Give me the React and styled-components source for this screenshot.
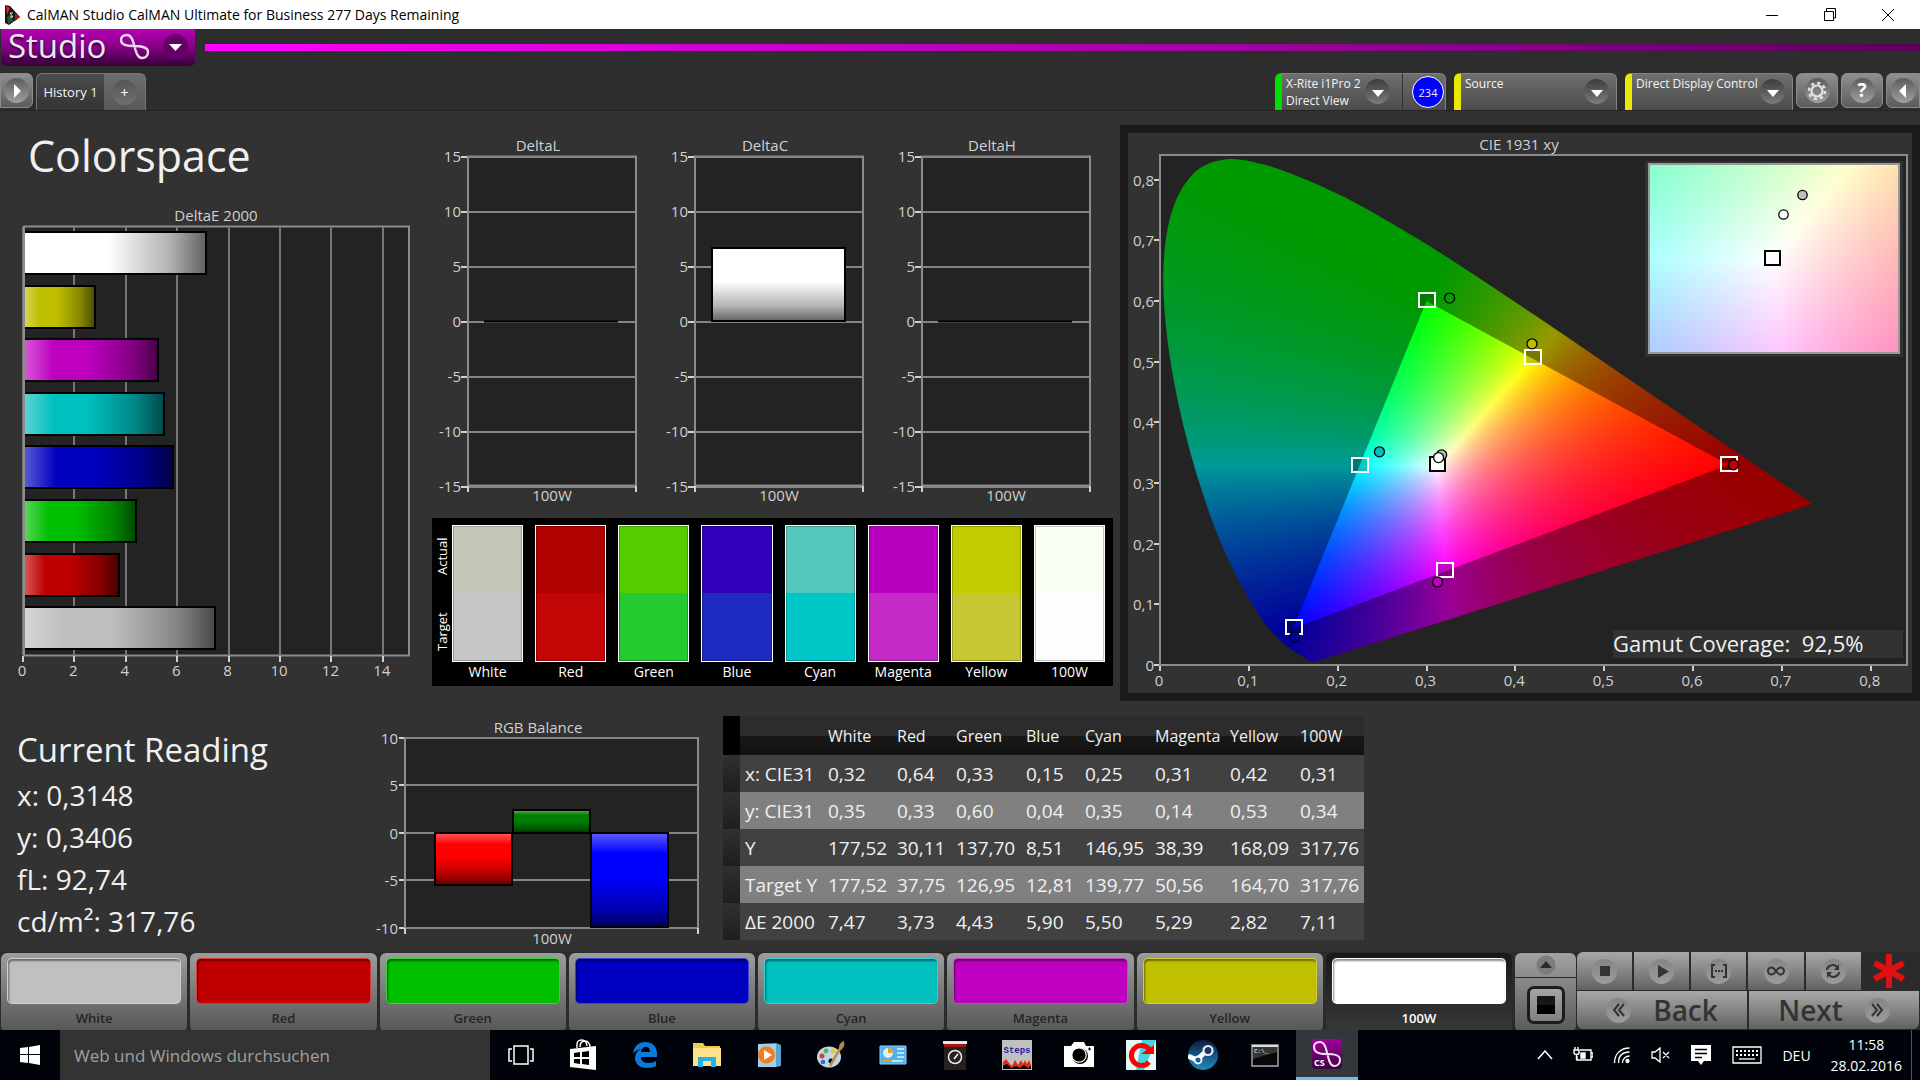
import React from 'react';
import styled, { createGlobalStyle } from 'styled-components';

const GlobalStyle = createGlobalStyle`
  * {
    box-sizing: border-box;
  }
  body {
    margin: 0;
    background: #323232;
    font-family: "Open Sans", "Noto Sans", sans-serif;
    color: #f0f0f0;
  }
  button, input {
    font-family: inherit;
    border: 0;
    padding: 0;
    margin: 0;
  }
  h1, h2, p {
    margin: 0;
    font-weight: 400;
  }
`;

const Page = styled.div`
  display: flex;
  flex-direction: column;
  min-height: 100vh;
`;

/* window title */
const TitleBar = styled.header`
  display: flex;
  align-items: center;
  justify-content: space-between;
  height: 29px;
  background: #fff;
  color: #000;
  font-size: 14px;
`;
const TitleText = styled.div`
  display: flex;
  align-items: center;
  gap: 6px;
  padding-left: 4px;
`;
const WindowButtons = styled.div`
  display: flex;
  padding-right: 3px;
`;
const WindowButton = styled.button`
  display: grid;
  place-items: center;
  width: 58px;
  height: 29px;
  background: none;
`;

/* app header */
const AppHeader = styled.div`
  height: 82px;
  background: #2d2d2d;
  border-bottom: 1px solid #252525;
`;
const BrandRow = styled.div`
  display: flex;
  align-items: flex-start;
  height: 44px;
`;
const StudioButton = styled.button`
  display: flex;
  align-items: center;
  justify-content: space-between;
  width: 194px;
  height: 37px;
  margin-left: 1px;
  padding: 0 7px 3px 7px;
  border-radius: 0 0 5px 5px;
  background: linear-gradient(#b400b4, #8a008a 45%, #37003a);
  color: #f0e6f0;
  font-size: 33px;
  font-weight: 500;
  line-height: 32px;
  text-shadow: 0 2px 2px #300030;
`;
const Stripe = styled.div`
  flex: 1;
  height: 7px;
  margin: 15px 0 0 10px;
  background: linear-gradient(90deg, #ff00ff, #a800a8 55%, #580058);
`;
const TabRow = styled.div`
  display: flex;
  justify-content: space-between;
  height: 37px;
`;
const TabGroup = styled.div`
  display: flex;
  align-items: flex-start;
`;
const SquareButton = styled.button`
  display: grid;
  place-items: center;
  width: ${(p) => p.$width || 42}px;
  height: 35px;
  margin-left: ${(p) => p.$gap ?? 3}px;
  border: 1px solid #8c8c8c;
  border-radius: ${(p) => p.$radius || '6px'};
  background: linear-gradient(#8f8f8f, #5c5c5c);
`;
const Round = styled.span`
  display: grid;
  place-items: center;
  width: 25px;
  height: 25px;
  border-radius: 50%;
  background: ${(p) => (p.$light ? 'linear-gradient(#5c5c5c, #a0a0a0)' : 'linear-gradient(#3c3c3c, #7c7c7c)')};
  color: #fff;
  font-size: 19px;
  line-height: 25px;
`;
const HistoryTab = styled.button`
  width: 68px;
  height: 37px;
  margin-left: 3px;
  border: 1px solid #777;
  border-width: 1px 0 0 1px;
  border-radius: 6px 0 0 0;
  background: linear-gradient(#4c4c4c, #333);
  color: #f4f4f4;
  font-size: 13px;
`;
const AddTab = styled.button`
  display: grid;
  place-items: center;
  width: 42px;
  height: 37px;
  border: 1px solid #777;
  border-width: 1px 1px 0 0;
  border-radius: 0 6px 0 0;
  background: linear-gradient(#6e6e6e, #575757);

  ${Round} {
    background: linear-gradient(#555, #707070);
    font-size: 14px;
  }
`;
const Device = styled.button`
  display: flex;
  align-items: flex-start;
  justify-content: space-between;
  width: ${(p) => p.$width}px;
  height: 37px;
  padding: 1px ${(p) => (p.$joined ? 12 : 7)}px 0 4px;
  border: 1px solid #838383;
  border-left: 7px solid ${(p) => p.$color};
  border-bottom: 0;
  border-radius: ${(p) => (p.$joined ? '6px 0 0 0' : '6px 6px 0 0')};
  border-right-width: ${(p) => (p.$joined ? 0 : 1)}px;
  background: linear-gradient(#6f6f6f, #4b4b4b);
  color: #f4f4f4;
  font-size: 12px;
  line-height: 17px;
  text-align: left;
  white-space: nowrap;
  margin-left: ${(p) => (p.$joined ? 0 : 8)}px;

  ${Round} {
    margin-top: 4px;
  }
`;
const Counter = styled.div`
  display: grid;
  place-items: center;
  width: 44px;
  height: 37px;
  padding-left: 8px;
  border: 1px solid #838383;
  border-left: 1px solid #333;
  border-bottom: 0;
  border-radius: 0 6px 0 0;
  background: linear-gradient(#6f6f6f, #4b4b4b);
`;
const Count = styled.span`
  display: grid;
  place-items: center;
  width: 32px;
  height: 32px;
  border: 1px solid #fff;
  border-radius: 50%;
  background: #00f;
  font-size: 11px;
`;

/* charts area */
const Workspace = styled.main`
  flex: 1;
  background: #323232;
`;
const TopGrid = styled.section`
  display: grid;
  grid-template-columns: 430fr 690fr 800fr;
  align-items: start;
`;
const Heading = styled.h1`
  padding: 0 0 4px 28px;
  font-size: 43px;
  line-height: 90px;
`;
const Chart = styled.svg`
  display: block;
  width: 100%;
  height: auto;
  font-size: 15px;
  fill: #d0d0d0;
`;
const MiddleColumn = styled.div`
  padding: 25px 7px 0 2px;
`;
const DeltaRow = styled.div`
  display: grid;
  grid-template-columns: repeat(3, 1fr);
`;
const SwatchPanel = styled.div`
  display: flex;
  height: 168px;
  margin-top: 7px;
  background: #000;
`;
const SideLabels = styled.div`
  display: flex;
  flex-direction: column;
  width: 20px;
  padding-bottom: 16px;
`;
const SideLabel = styled.span`
  flex: 1;
  writing-mode: vertical-rl;
  transform: rotate(180deg);
  text-align: center;
  font-size: 13px;
  line-height: 20px;
  color: #fff;
`;
const Swatches = styled.div`
  flex: 1;
  display: grid;
  grid-template-columns: repeat(8, 1fr);
  gap: 12px;
  padding: 7px 8px 0 0;
`;
const SwatchName = styled.div`
  font-size: 14px;
  line-height: 20px;
  text-align: center;
  color: #fff;
`;
const Swatch = styled.div`
  height: 137px;
  border: 1px solid #fff;
  background: linear-gradient(${(p) => p.$actual} 50%, ${(p) => p.$target} 50%);
  box-shadow: inset 0 0 0 1px rgba(0, 0, 0, 0.22);
`;
const CiePanel = styled.div`
  margin-top: 14px;
  padding: 8px;
  background: #1a1a1a;
`;
const CieInner = styled.div`
  background: #323232;
`;

const BottomGrid = styled.section`
  display: grid;
  grid-template-columns: 372fr 338fr 1210fr;
  align-items: start;
`;
const Readings = styled.div`
  padding: 25px 0 0 17px;
`;
const ReadingTitle = styled.h2`
  font-size: 33px;
  line-height: 48px;
`;
const Reading = styled.p`
  font-size: 28px;
  line-height: 42px;
`;
const Results = styled.table`
  width: 641px;
  margin: 15px 0 0 13px;
  border-collapse: collapse;
  table-layout: fixed;
  color: #f0f0f0;
  font-size: 19px;

  th, td {
    height: 37px;
    padding: 0 0 0 5px;
    font-weight: 400;
    text-align: left;
    white-space: nowrap;
  }
  thead td, thead th {
    height: 39px;
    padding-top: 1px;
  }
  tbody tr {
    background: #414141;
  }
  tbody tr:nth-child(even) {
    background: #808080;
  }
`;
const HeadRow = styled.tr`
  background: linear-gradient(#2c2c2c 50%, #191919 50%, #111);
  font-size: 16px;
`;
const Grip = styled.td`
  width: 17px;
  background: ${(p) => (p.$head ? '#000' : 'linear-gradient(#303030, #1e1e1e)')};
`;

/* colour buttons and transport */
const PatternBar = styled.nav`
  display: grid;
  grid-template-columns: 1515fr 61fr 344fr;
  height: 78px;
  background: #2b2b2b;
`;
const Patterns = styled.div`
  display: grid;
  grid-template-columns: repeat(8, 1fr);
  gap: 3px;
  padding: 1px 3px 1px 1px;
`;
const Pattern = styled.button`
  display: flex;
  flex-direction: column;
  align-items: stretch;
  padding: 5px 6px 0;
  border-radius: 6px;
  background: ${(p) => (p.$active ? 'linear-gradient(#191919, #383838)' : 'linear-gradient(#9d9d9d, #565656)')};
  color: ${(p) => (p.$active ? '#fff' : '#252525')};
  font-size: 13px;
  font-weight: 600;
  line-height: 28px;
`;
const PatternColor = styled.span`
  height: 46px;
  border-radius: 5px;
  background: ${(p) => p.$color};
  border: 1px solid rgba(255, 255, 255, 0.25);
  box-shadow: inset 1px 2px 2px rgba(0, 0, 0, 0.45);
`;
const StopColumn = styled.div`
  display: flex;
  flex-direction: column;
  gap: 1px;
  padding: 1px 0;
`;
const StopButton = styled.button`
  display: grid;
  place-items: center;
  flex: ${(p) => p.$grow};
  border-radius: ${(p) => (p.$grow === 1 ? '6px 6px 0 0' : '0 0 6px 6px')};
  background: ${(p) => (p.$grow === 1 ? 'linear-gradient(#a2a2a2, #8c8c8c)' : 'linear-gradient(#8a8a8a, #595959)')};
`;
const StopFrame = styled.span`
  display: grid;
  place-items: center;
  width: 38px;
  height: 38px;
  border: 3px solid #1c1c1c;
  border-radius: 7px;
  background: linear-gradient(#a5a5a5, #808080);
`;
const StopSquare = styled.span`
  width: 18px;
  height: 18px;
  background: linear-gradient(#161616 50%, #000 50%);
`;
const Transport = styled.div`
  display: flex;
  flex-direction: column;
  gap: 1px;
  padding: 0 1px 1px;
`;
const TransportRow = styled.div`
  display: grid;
  grid-template-columns: ${(p) => p.$columns};
  gap: 2px;
  height: 38px;
`;
const TransportButton = styled.button`
  display: flex;
  align-items: center;
  justify-content: center;
  gap: 22px;
  background: linear-gradient(#a8a8a8, #626262);
  color: #333;
  font-size: 28px;
  font-weight: 600;
  line-height: 36px;
  border-radius: ${(p) => p.$radius || '0'};
`;
const Knob = styled.span`
  display: grid;
  place-items: center;
  width: 25px;
  height: 25px;
  border-radius: 50%;
  background: linear-gradient(#858585, #9c9c9c);
`;
const Star = styled.div`
  display: grid;
  justify-items: start;
  align-items: center;
  padding-left: 9px;
`;

/* windows taskbar */
const Taskbar = styled.footer`
  display: flex;
  justify-content: space-between;
  height: 50px;
  background: #00040a;
`;
const TaskGroup = styled.div`
  display: flex;
  align-items: stretch;
`;
const TaskButton = styled.button`
  display: grid;
  place-items: center;
  width: ${(p) => p.$width || 62}px;
  background: ${(p) => (p.$active ? '#33373c' : 'none')};
  border-bottom: ${(p) => (p.$active ? '3px solid #76b9ed' : '0')};
`;
const Search = styled.input`
  width: 430px;
  padding: 0 14px;
  background: #333;
  font-size: 17px;

  &::placeholder {
    color: #a0a0a0;
    opacity: 1;
  }
`;
const Tray = styled.div`
  display: flex;
  align-items: center;
  gap: 20px;
  padding-right: 9px;
  border-right: 1px solid #555;
  margin-right: 8px;
  color: #fff;
  font-size: 14px;
  line-height: 21px;
`;
const Clock = styled.time`
  text-align: center;
`;

const deltaE = [
  ['#ffffff', 7.11], ['#bfbf00', 2.82], ['#bf00bf', 5.25], ['#00bfbf', 5.5],
  ['#0000bf', 5.85], ['#00bf00', 4.4], ['#bf0000', 3.73], ['#bfbfbf', 7.47],
];

const swatches = [
  ['White', '#c4c7b8', '#c5c5c5'],
  ['Red', '#b10000', '#c20606'],
  ['Green', '#55cc00', '#24cb30'],
  ['Blue', '#3200bb', '#1e2ac2'],
  ['Cyan', '#54c8bc', '#00c6c8'],
  ['Magenta', '#b800be', '#c42bc6'],
  ['Yellow', '#c2ca00', '#c6c733'],
  ['100W', '#f6fff2', '#fdfdfd'],
];

const patterns = [
  ['White', '#c0c0c0'], ['Red', '#c00000'], ['Green', '#00c000'], ['Blue', '#0000c0'],
  ['Cyan', '#00c0c0'], ['Magenta', '#c000c0'], ['Yellow', '#c0c000'], ['100W', '#ffffff'],
];

const columns = [['White', 69], ['Red', 59], ['Green', 70], ['Blue', 59], ['Cyan', 70], ['Magenta', 75], ['Yellow', 70], ['100W', 69]];
const rows = [
  ['x: CIE31', '0,32', '0,64', '0,33', '0,15', '0,25', '0,31', '0,42', '0,31'],
  ['y: CIE31', '0,35', '0,33', '0,60', '0,04', '0,35', '0,14', '0,53', '0,34'],
  ['Y', '177,52', '30,11', '137,70', '8,51', '146,95', '38,39', '168,09', '317,76'],
  ['Target Y', '177,52', '37,75', '126,95', '12,81', '139,77', '50,56', '164,70', '317,76'],
  ['ΔE 2000', '7,47', '3,73', '4,43', '5,90', '5,50', '5,29', '2,82', '7,11'],
];

/* shine for the bars, laid over a flat colour */
function Shine({ id, vertical }) {
  return (
    <linearGradient id={id} x1="0" y1="0" x2={vertical ? 0 : 1} y2={vertical ? 1 : 0}>
      <stop offset="0" stopColor="#fff" stopOpacity="0.36" />
      <stop offset="0.22" stopColor="#fff" stopOpacity="0" />
      <stop offset="0.46" stopColor="#000" stopOpacity="0" />
      <stop offset="0.8" stopColor="#000" stopOpacity="0.3" />
      <stop offset="1" stopColor="#000" stopOpacity="0.62" />
    </linearGradient>
  );
}

function DeltaEChart() {
  const unit = 25.7;
  return (
    <Chart viewBox="0 0 430 480" role="img" aria-label="DeltaE 2000">
      <defs><Shine id="shineH" /></defs>
      <text x="216" y="16" textAnchor="middle">DeltaE 2000</text>
      <rect x="24" y="21.5" width="385" height="429" fill="#232323" stroke="#8c8c8c" strokeWidth="2" />
      {[0, 2, 4, 6, 8, 10, 12, 14].map((n) => (
        <g key={n}>
          <path d={`M${Math.round(23 + n * unit)} 22V450`} stroke="#757575" strokeWidth="2" />
          <path d={`M${Math.round(23 + n * unit)} 451V457`} stroke="#d0d0d0" strokeWidth="2" />
          <text x={22 + n * unit} y="471" textAnchor="middle">{n}</text>
        </g>
      ))}
      {deltaE.map(([color, value], i) => {
        const box = { x: 24, y: Math.round(27 + i * 53.6), width: Math.round(value * unit) - 1, height: 42 };
        return (
          <g key={color}>
            <rect {...box} fill={color} />
            <rect {...box} fill="url(#shineH)" stroke="#000" strokeWidth="2" />
          </g>
        );
      })}
      <path d="M24 22V451" stroke="#8c8c8c" strokeWidth="2" />
    </Chart>
  );
}

function DeltaChart({ title, filled }) {
  return (
    <Chart viewBox="0 0 227 375" role="img" aria-label={title}>
      <defs><Shine id="shineV" vertical /></defs>
      <text x="106" y="15" textAnchor="middle">{title}</text>
      <rect x="36" y="20.5" width="168" height="329" fill="#232323" stroke="#8c8c8c" strokeWidth="2" />
      {[15, 10, 5, 0, -5, -10, -15].map((n, i) => (
        <g key={n}>
          <path d={`M36 ${21 + i * 55}H204`} stroke="#858585" strokeWidth="2" />
          <path d={`M29 ${21 + i * 55}H35`} stroke="#d0d0d0" strokeWidth="2" />
          <text x="29" y={26 + i * 55} textAnchor="end">{n}</text>
        </g>
      ))}
      <path d="M36 350V356M204 350V356" stroke="#d0d0d0" strokeWidth="2" />
      {filled ? (
        <g>
          <rect x="53" y="112" width="133" height="73" fill="#fff" />
          <rect x="53" y="112" width="133" height="73" fill="url(#shineV)" stroke="#000" strokeWidth="2" />
        </g>
      ) : (
        <path d="M52 185.500H186" stroke="#000" strokeWidth="2" />
      )}
      <text x="120" y="365" textAnchor="middle">100W</text>
    </Chart>
  );
}

function RgbChart() {
  const bars = [
    { color: '#ff0000', x: 63, y: 132, height: 52 },
    { color: '#008000', x: 141, y: 109, height: 23 },
    { color: '#0000ff', x: 219, y: 132, height: 94 },
  ];
  return (
    <Chart viewBox="0 0 338 250" role="img" aria-label="RGB Balance">
      <defs><Shine id="shineRgb" vertical /></defs>
      <text x="166" y="32" textAnchor="middle">RGB Balance</text>
      <rect x="33" y="37" width="293" height="190" fill="#232323" stroke="#8c8c8c" strokeWidth="2" />
      {[10, 5, 0, -5, -10].map((n, i) => (
        <g key={n}>
          <path d={`M33 ${Math.round(37 + i * 47.4)}H326`} stroke="#858585" strokeWidth="2" />
          <path d={`M27 ${Math.round(37 + i * 47.4)}H32`} stroke="#d0d0d0" strokeWidth="2" />
          <text x="26" y={Math.round(43 + i * 47.4)} textAnchor="end">{n}</text>
        </g>
      ))}
      <path d="M33 227V233M326 227V233" stroke="#d0d0d0" strokeWidth="2" />
      {bars.map(({ color, ...box }) => (
        <g key={color}>
          <rect {...box} width="77" fill={color} />
          <rect {...box} width="77" fill="url(#shineRgb)" stroke="#000" strokeWidth="2" />
        </g>
      ))}
      <text x="180" y="243" textAnchor="middle">100W</text>
    </Chart>
  );
}

/* spectral locus, xy pairs by wavelength */
const locus = [
  [0.1741, 0.005], [0.1714, 0.0051], [0.1689, 0.0069], [0.1644, 0.0109], [0.1566, 0.0177], [0.144, 0.0297],
  [0.1241, 0.0578], [0.1096, 0.0868], [0.0913, 0.1327], [0.0687, 0.2007], [0.0454, 0.295], [0.0235, 0.4127],
  [0.0082, 0.5384], [0.0039, 0.6548], [0.0139, 0.7502], [0.0389, 0.812], [0.0743, 0.8338], [0.1142, 0.8262],
  [0.1547, 0.8059], [0.1929, 0.7816], [0.2296, 0.7543], [0.3016, 0.6923], [0.3731, 0.6245], [0.4441, 0.5547],
  [0.5125, 0.4866], [0.5752, 0.4242], [0.627, 0.3725], [0.6658, 0.334], [0.6915, 0.3083], [0.719, 0.2809],
  [0.7347, 0.2653],
];

const PLOT = { x: 32, y: 22, w: 747, h: 510 };
const px = (x) => PLOT.x + x * 888.4;
const py = (y) => PLOT.y + PLOT.h - y * 606.5;

function curve(points) {
  const p = points.map(([x, y]) => [px(x), py(y)]);
  let d = `M${p[0]}`;
  for (let i = 0; i < p.length - 1; i++) {
    const a = p[Math.max(i - 1, 0)];
    const b = p[i];
    const c = p[i + 1];
    const e = p[Math.min(i + 2, p.length - 1)];
    d += `C${b[0] + (c[0] - a[0]) / 6} ${b[1] + (c[1] - a[1]) / 6} ${c[0] - (e[0] - b[0]) / 6} ${c[1] - (e[1] - b[1]) / 6} ${c[0]} ${c[1]}`;
  }
  return d + 'Z';
}

function xyColor(x, y, level) {
  const X = x / y;
  const Z = (1 - x - y) / y;
  const rgb = [
    3.2406 * X - 1.5372 - 0.4986 * Z,
    -0.9689 * X + 1.8758 + 0.0415 * Z,
    0.0557 * X - 0.204 + 1.057 * Z,
  ].map((v) => Math.max(v, 0));
  const top = Math.max(...rgb);
  return `rgb(${rgb.map((v) => Math.round((v / top) * 255 * level)).join(',')})`;
}

/* thin rows, each with its own gradient from left to right */
function ColorField({ name, box, toX, toY, level, step, rowHeight }) {
  const out = [];
  for (let y = box.y; y < box.y + box.h; y += rowHeight) {
    const stops = [];
    for (let x = 0; x <= box.w; x += step) {
      stops.push(
        <stop key={x} offset={x / box.w} stopColor={xyColor(toX(box.x + x), Math.max(toY(y + rowHeight / 2), 0.002), level)} />
      );
    }
    out.push(
      <g key={y}>
        <linearGradient id={`${name}${y}`}>{stops}</linearGradient>
        <rect x={box.x} y={y} width={box.w} height={Math.min(rowHeight, box.y + box.h - y)} fill={`url(#${name}${y})`} />
      </g>
    );
  }
  return <g shapeRendering="crispEdges">{out}</g>;
}

const toX = (x) => (x - PLOT.x) / 888.4;
const toY = (y) => (PLOT.y + PLOT.h - y) / 606.5;

const targets = [[0.3, 0.6], [0.42, 0.506], [0.2246, 0.3287], [0.64, 0.33], [0.321, 0.155], [0.151, 0.061]];
const measured = [
  [0.326, 0.605, '#00a000'], [0.4187, 0.5295, '#bfbf00'], [0.247, 0.3515, '#00bfbf'],
  [0.6455, 0.33, '#bf0000'], [0.3124, 0.137, '#bf00bf'], [0.1514, 0.046, '#0000a0'],
  [0.317, 0.3465, '#c0c0c0'], [0.3136, 0.342, '#ffffff'],
];

function CieChart() {
  return (
    <Chart viewBox="0 0 784 560" role="img" aria-label="CIE 1931 xy">
      <clipPath id="locus"><path d={curve(locus)} /></clipPath>
      <clipPath id="gamut">
        <path d={`M${px(0.3)} ${py(0.6)}L${px(0.64)} ${py(0.33)}L${px(0.15)} ${py(0.06)}Z`} />
      </clipPath>
      <text x="391" y="17" textAnchor="middle">CIE 1931 xy</text>
      <rect x={PLOT.x} y={PLOT.y} width={PLOT.w} height={PLOT.h} fill="#232323" stroke="#8c8c8c" strokeWidth="2" />
      {[0, 1, 2, 3, 4, 5, 6, 7, 8].map((n) => (
        <g key={n}>
          <path
            d={`M${Math.round(px(n / 10))} 533V538M26 ${Math.round(py(n / 10))}H31`}
            stroke="#d0d0d0"
            strokeWidth="2"
          />
          <text x={px(n / 10) - 1} y="553" textAnchor="middle">{n ? `0,${n}` : 0}</text>
          <text x="26" y={py(n / 10) + 6} textAnchor="end">{n ? `0,${n}` : 0}</text>
        </g>
      ))}
      <g clipPath="url(#locus)">
        <ColorField name="o" box={{ x: 34, y: 24, w: 656, h: 508 }} toX={toX} toY={toY} level={0.6} step={8} rowHeight={3} />
      </g>
      <g clipPath="url(#gamut)">
        <ColorField name="i" box={{ x: 160, y: 168, w: 444, h: 330 }} toX={toX} toY={toY} level={1} step={6} rowHeight={2} />
      </g>
      {targets.map(([x, y]) => (
        <rect key={x} x={Math.round(px(x)) - 8} y={Math.round(py(y)) - 8} width="16" height="14" fill="rgba(0,0,0,0.2)" stroke="#fff" strokeWidth="2" />
      ))}
      <rect x={Math.round(px(0.3127)) - 8} y={Math.round(py(0.329)) - 8} width="15" height="14" fill="#fff" stroke="#000" strokeWidth="2" />
      {measured.map(([x, y, color]) => (
        <circle key={x} cx={px(x)} cy={py(y)} r="5" fill={color} stroke="#000" strokeWidth="1.3" />
      ))}

      <rect x="517" y="28" width="258" height="196" fill="#323232" />
      <ColorField
        name="z"
        box={{ x: 521, y: 31, w: 250, h: 189 }}
        toX={(x) => 0.3127 + (x - 645) / 5080}
        toY={(y) => 0.329 + (125 - y) / 3730}
        level={1}
        step={10}
        rowHeight={3}
      />
      <rect x="521" y="31" width="250" height="189" fill="none" stroke="#999" strokeWidth="2" />
      <rect x="637" y="118" width="15" height="14" fill="none" stroke="#000" strokeWidth="2" />
      <circle cx="674.5" cy="62" r="4.7" fill="#c0c0c0" stroke="#000" strokeWidth="1.3" />
      <circle cx="655.5" cy="81.5" r="4.7" fill="#fff" stroke="#000" strokeWidth="1.3" />

      <rect x="485" y="497" width="290" height="28" fill="#323232" />
      <text x="485" y="519" fontSize="22" fill="#f0f0f0">Gamut Coverage:{'\u00a0\u00a0'}92,5%</text>
    </Chart>
  );
}

const Triangle = ({ d, fill = '#fff' }) => (
  <svg width="16" height="16" viewBox="0 0 16 16"><path d={d} fill={fill} /></svg>
);
const DOWN = 'M2 6h12L8 13z';
const LEFT = 'M11 1v14L4 8z';
const RIGHT = 'M5 1v14l7-7z';

const dark = { fill: 'none', stroke: '#333', strokeWidth: 2 };
const LOOP = 'M14 13C6 13 2 11 2 7c0-3 2-5 6-5 9 0 6 23 15 23 4 0 6-3 6-6 0-5-6-6-15-6z';

const taskIcons = [
  <svg key="view" width="26" height="22" viewBox="0 0 26 22" fill="none" stroke="#fff" strokeWidth="1.5">
    <path d="M6 2h14v18H6zM4 5H1v12h3M22 5h3v12h-3" />
  </svg>,
  <svg key="store" width="28" height="32" viewBox="0 0 28 32">
    <path d="M8 9V5c0-3 3-4 5-4s5 2 5 6M11 8c0-4 2-6 5-6s5 3 5 6" fill="none" stroke="#fff" strokeWidth="1.4" />
    <path d="M1 10l26-3v24L1 28z" fill="#fff" />
    <path d="M5 14l6-1v5H5zm8-1l7-1v6h-7zm-8 7h6v5l-6-1zm8 0h7v6l-7-1z" fill="#000" />
  </svg>,
  <svg key="edge" width="26" height="28" viewBox="0 0 26 28">
    <path d="M1 13C2 5 7 1 13 1c8 0 12 5 12 12v3H9c0 4 3 6 8 6 3 0 5-1 7-2v5c-2 1-5 2-9 2C8 27 3 23 3 17c0-4 2-7 6-9C5 9 3 10 1 13zm8-2h9c0-3-1-5-4-5-3 0-5 2-5 5z" fill="#0a7bdc" />
  </svg>,
  <svg key="files" width="30" height="26" viewBox="0 0 30 26">
    <path d="M1 1h10l2 3h15v20H1z" fill="#f2c94c" />
    <path d="M1 6h28v18H1z" fill="#fde28a" />
    <path d="M6 25V15h18v10h-5v-6h-8v6z" fill="#29b0e8" />
  </svg>,
  <svg key="media" width="26" height="26" viewBox="0 0 26 26">
    <path d="M2 2l18-1 5 2v21l-5 1H2z" fill="#5aa5cf" />
    <path d="M2 2h18v23H2z" fill="#a4d0e6" />
    <circle cx="10.500" cy="13" r="8.500" fill="#f47c20" />
    <path d="M8 8v10l8-5z" fill="#fff" />
  </svg>,
  <svg key="paint" width="30" height="28" viewBox="0 0 30 28">
    <ellipse cx="13" cy="16" rx="12" ry="10.500" fill="#bcd8ea" />
    <circle cx="6" cy="15" r="2.500" fill="#d8402c" /><circle cx="10" cy="10" r="2.400" fill="#5bb53d" />
    <circle cx="17" cy="10" r="2.400" fill="#f0c22c" /><circle cx="7" cy="21" r="2.300" fill="#2f6fd0" />
    <circle cx="15" cy="20" r="2.500" fill="#00040a" />
    <path d="M25 6L14 25" stroke="#c98a3e" strokeWidth="2.500" />
    <path d="M23 7c0-4 2-6 5-7 1 4 0 7-3 9z" fill="#b98352" />
  </svg>,
  <svg key="panel" width="28" height="20" viewBox="0 0 28 20">
    <path d="M1 1h26v18H1z" fill="#4fb2ea" stroke="#8ed0f5" />
    <circle cx="9" cy="8" r="5" fill="#d8f0ff" /><path d="M9 8V3a5 5 0 0 1 5 5z" fill="#f0a020" />
    <path d="M18 4h7M18 8h7M18 12h7M4 16h20" stroke="#e4f5ff" strokeWidth="1.500" />
    <path d="M4 16h9" stroke="#f0a020" strokeWidth="2" />
  </svg>,
  <svg key="gauge" width="26" height="30" viewBox="0 0 26 30">
    <path d="M2 3h22v27H2z" fill="#25211f" /><path d="M1 1h24v3H1z" fill="#e4e4e4" /><path d="M2 4h22v3H2z" fill="#a01616" />
    <circle cx="13" cy="17" r="6.500" fill="none" stroke="#eee" strokeWidth="1.500" />
    <path d="M12 19l4-5" stroke="#eee" strokeWidth="1.800" />
  </svg>,
  <svg key="steps" width="30" height="30" viewBox="0 0 30 30">
    <path d="M0 0h30v30H0z" fill="#c0c0c0" />
    <text x="15" y="13" fontSize="9" fontWeight="700" textAnchor="middle" fill="#1c1c9c" fontFamily="Liberation Mono">Steps</text>
    <path d="M1 29V22l3-3 3 4 3 3 3-6 3 5 3-5 2 4 2-4 2 4 2-4 2 5v4z" fill="#e22c10" />
    <path d="M1 29v-3l4-2 4 4 5-2 4 2 4-3 4 3 3-2v3z" fill="#000" />
  </svg>,
  <svg key="camera" width="30" height="26" viewBox="0 0 30 26">
    <path d="M0 4h7l3-4h10l2 4h8v21H0z" fill="#fff" />
    <circle cx="16" cy="14" r="8" fill="#000" /><circle cx="15" cy="13" r="7.200" stroke="#fff" strokeWidth="1.200" fill="#000" />
    <path d="M24 7h3M25.500 5.500v3" stroke="#000" />
  </svg>,
  <svg key="reload" width="30" height="30" viewBox="0 0 30 30">
    <path d="M0 0h30v30H0z" fill="#e6f7f7" /><path d="M16 0h14L18 30h-8z" fill="#45d5dc" />
    <path d="M23 22a10 10 0 1 1 0-13" fill="none" stroke="#f00" strokeWidth="5" /><path d="M15 14h13V5z" fill="#f00" />
  </svg>,
  <svg key="steam" width="30" height="30" viewBox="0 0 30 30">
    <defs><linearGradient id="steamBg" x2="0" y2="1"><stop stopColor="#101c40" /><stop offset="1" stopColor="#1d8cc4" /></linearGradient></defs>
    <circle cx="15" cy="15" r="15" fill="url(#steamBg)" />
    <path d="M0 16l9 4 7-7" fill="none" stroke="#fff" strokeWidth="5" />
    <circle cx="20" cy="10.500" r="4.500" fill="#1a3564" stroke="#e8eef4" strokeWidth="2.200" />
    <circle cx="10" cy="20" r="3.500" fill="#1c5f94" stroke="#fff" strokeWidth="1.800" />
  </svg>,
  <svg key="console" width="28" height="23" viewBox="0 0 28 23">
    <path d="M1 1h26v21H1z" fill="#080808" stroke="#aaa" strokeWidth="1.400" /><path d="M1 1h26v2H1z" fill="#ddd" />
    <path d="M2 3h24v5L2 15z" fill="#353535" />
    <text x="3" y="9" fontSize="6" fill="#fff" fontFamily="Liberation Mono">C:\_</text>
  </svg>,
];

export default function App() {
  return (
    <Page>
      <GlobalStyle />
      <TitleBar>
        <TitleText>
          <svg width="17" height="20" viewBox="0 0 17 20">
            <path d="M1 0l5 1 10 11-11 8-4-2z" fill="#1b1410" />
            <path d="M2 1l4 2-3 7z" fill="#e02020" /><path d="M3 12l4-3 2 7-5 3z" fill="#1f5a2a" /><path d="M11 8l5 4-5 4z" fill="#a02018" />
            <path d="M9 8H6l3 4H6" stroke="#f0e8d8" fill="none" />
          </svg>
          CalMAN Studio CalMAN Ultimate for Business 277 Days Remaining
        </TitleText>
        <WindowButtons>
          <WindowButton aria-label="Minimize"><svg width="12" height="12"><path d="M0 6.500h12" stroke="#000" /></svg></WindowButton>
          <WindowButton aria-label="Restore">
            <svg width="12" height="13" fill="none" stroke="#000"><path d="M.5 3.500h9v9h-9zM2.500 3V.5h9v9.500H10" /></svg>
          </WindowButton>
          <WindowButton aria-label="Close"><svg width="12" height="12"><path d="M0 0l12 12M12 0L0 12" stroke="#000" /></svg></WindowButton>
        </WindowButtons>
      </TitleBar>

      <AppHeader>
        <BrandRow>
          <StudioButton>
            Studio
            <svg width="31" height="27" viewBox="0 0 31 27" fill="none" stroke="#e9d7ea" strokeWidth="2.400"><path d={LOOP} /></svg>
            <svg width="25" height="25" viewBox="0 0 25 25"><circle cx="12.500" cy="12.500" r="12.500" fill="#620068" /><path d="M6 10h13l-6.500 7z" fill="#fff" /></svg>
          </StudioButton>
          <Stripe />
        </BrandRow>
        <TabRow>
          <TabGroup>
            <SquareButton $width={33} $gap={0} $radius="0 6px 6px 0" aria-label="Expand"><Round $light><Triangle d={RIGHT} /></Round></SquareButton>
            <HistoryTab>History 1</HistoryTab>
            <AddTab aria-label="Add tab"><Round>+</Round></AddTab>
          </TabGroup>
          <TabGroup>
            <Device $width={127} $color="#0d0" $joined>
              <span>X-Rite i1Pro 2<br />Direct View</span>
              <Round><Triangle d={DOWN} /></Round>
            </Device>
            <Counter><Count>234</Count></Counter>
            <Device $width={163} $color="#e8e800"><span>Source</span><Round><Triangle d={DOWN} /></Round></Device>
            <Device $width={168} $color="#e8e800"><span>Direct Display Control</span><Round><Triangle d={DOWN} /></Round></Device>
            <SquareButton aria-label="Settings">
              <Round $light>
                <svg width="20" height="20" viewBox="0 0 20 20" fill="none" stroke="#e4e4e4">
                  <circle cx="10" cy="10" r="5.500" strokeWidth="2.200" />
                  <circle cx="10" cy="10" r="8" strokeWidth="2.400" strokeDasharray="3.140 3.140" />
                </svg>
              </Round>
            </SquareButton>
            <SquareButton aria-label="Help"><Round $light><b>?</b></Round></SquareButton>
            <SquareButton $width={34} $radius="6px 0 0 6px" aria-label="Collapse"><Round $light><Triangle d={LEFT} /></Round></SquareButton>
          </TabGroup>
        </TabRow>
      </AppHeader>

      <Workspace>
        <TopGrid>
          <div>
            <Heading>Colorspace</Heading>
            <DeltaEChart />
          </div>
          <MiddleColumn>
            <DeltaRow>
              <DeltaChart title="DeltaL" />
              <DeltaChart title="DeltaC" filled />
              <DeltaChart title="DeltaH" />
            </DeltaRow>
            <SwatchPanel>
              <SideLabels>
                <SideLabel>Actual</SideLabel>
                <SideLabel>Target</SideLabel>
              </SideLabels>
              <Swatches>
                {swatches.map(([name, actual, target]) => (
                  <div key={name}>
                    <Swatch $actual={actual} $target={target} />
                    <SwatchName>{name}</SwatchName>
                  </div>
                ))}
              </Swatches>
            </SwatchPanel>
          </MiddleColumn>
          <CiePanel><CieInner><CieChart /></CieInner></CiePanel>
        </TopGrid>

        <BottomGrid>
          <Readings>
            <ReadingTitle>Current Reading</ReadingTitle>
            <Reading>x: 0,3148</Reading>
            <Reading>y: 0,3406</Reading>
            <Reading>fL: 92,74</Reading>
            <Reading>cd/m²: 317,76</Reading>
          </Readings>
          <RgbChart />
          <Results>
            <colgroup>
              <col width="17" />
              <col width="83" />
              {columns.map(([name, width]) => <col key={name} width={width} />)}
            </colgroup>
            <thead>
              <HeadRow>
                <Grip $head />
                <td />
                {columns.map(([name]) => <th key={name} scope="col">{name}</th>)}
              </HeadRow>
            </thead>
            <tbody>
              {rows.map(([label, ...cells]) => (
                <tr key={label}>
                  <Grip />
                  <th scope="row">{label}</th>
                  {cells.map((cell, i) => <td key={i}>{cell}</td>)}
                </tr>
              ))}
            </tbody>
          </Results>
        </BottomGrid>
      </Workspace>

      <PatternBar>
        <Patterns>
          {patterns.map(([name, color]) => (
            <Pattern key={name} $active={name === '100W'}>
              <PatternColor $color={color} />
              {name}
            </Pattern>
          ))}
        </Patterns>
        <StopColumn>
          <StopButton $grow={1} aria-label="Up">
            <svg width="20" height="20" viewBox="0 0 20 20"><circle cx="10" cy="10" r="9.500" fill="#7c7c7c" /><path d="M4 13h12l-6-7z" fill="#2a2a2a" /></svg>
          </StopButton>
          <StopButton $grow={2.3} aria-label="Pattern window"><StopFrame><StopSquare /></StopFrame></StopButton>
        </StopColumn>
        <Transport>
          <TransportRow $columns="repeat(5, 55fr) 56fr">
            <TransportButton $radius="6px 0 0 0" aria-label="Stop">
              <Knob><svg width="12" height="12"><path d="M1 1h10v10H1z" fill="#333" /></svg></Knob>
            </TransportButton>
            <TransportButton aria-label="Play"><Knob><Triangle d="M4 2v13l11-6.500z" fill="#333" /></Knob></TransportButton>
            <TransportButton aria-label="Measure series">
              <Knob><svg width="18" height="16" viewBox="0 0 18 16" {...dark}><path d="M5 2H2v12h3M13 2h3v12h-3M5 8h2M8 8h2M11 8h2" /></svg></Knob>
            </TransportButton>
            <TransportButton aria-label="Continuous">
              <Knob>
                <svg width="20" height="10" viewBox="0 0 20 10" {...dark}>
                  <path d="M10 5C8 2 7 1.500 5.500 1.500a3.500 3.500 0 0 0 0 7C7 8.500 8 8 10 5s3-3.500 4.500-3.500a3.500 3.500 0 0 1 0 7C13 8.500 12 8 10 5z" />
                </svg>
              </Knob>
            </TransportButton>
            <TransportButton aria-label="Refresh">
              <Knob>
                <svg width="16" height="16" viewBox="0 0 16 16" {...dark}>
                  <path d="M2 7c0-4 6-7 10-3M14 9c0 4-6 7-10 3" /><path d="M14 1v6H9zM2 15V9h5z" fill="#333" stroke="none" />
                </svg>
              </Knob>
            </TransportButton>
            <Star>
              <svg width="34" height="36" viewBox="0 0 34 36" stroke="#e01010" strokeWidth="6">
                <path d="M17 1v34M2.500 10l29 16M31.500 10l-29 16" />
              </svg>
            </Star>
          </TransportRow>
          <TransportRow $columns="1fr 1fr">
            <TransportButton $radius="0 0 0 6px">
              <Knob><svg width="14" height="14" {...dark}><path d="M7 1L2 7l5 6M12 1L7 7l5 6" /></svg></Knob>
              Back
            </TransportButton>
            <TransportButton $radius="0 0 6px 0">
              Next
              <Knob><svg width="14" height="14" {...dark}><path d="M2 1l5 6-5 6M7 1l5 6-5 6" /></svg></Knob>
            </TransportButton>
          </TransportRow>
        </Transport>
      </PatternBar>

      <Taskbar>
        <TaskGroup>
          <TaskButton $width={60} aria-label="Start">
            <svg width="20" height="20" viewBox="0 0 20 20"><path d="M0 3l8-1v7H0zm9-1l11-2v9H9zM0 10h8v8l-8-1zm9 0h11v10L9 18z" fill="#fff" /></svg>
          </TaskButton>
          <Search type="search" aria-label="Web und Windows durchsuchen" placeholder="Web und Windows durchsuchen" />
          {taskIcons.map((icon) => <TaskButton key={icon.key} aria-label={icon.key}>{icon}</TaskButton>)}
          <TaskButton $active aria-label="CalMAN Studio">
            <svg width="30" height="30" viewBox="0 0 30 30">
              <defs><linearGradient id="cs" x2="0" y2="1"><stop stopColor="#a000a0" /><stop offset="1" stopColor="#3c0040" /></linearGradient></defs>
              <rect width="30" height="30" rx="4" fill="url(#cs)" />
              <path d="M14 15C6 15 2 13 2 8c0-3 2-5 6-5 9 0 6 24 14 24 4 0 6-3 6-6 0-5-5-6-14-6z" fill="none" stroke="#f0e0f0" strokeWidth="2" />
              <text x="2" y="27" fontSize="9" fontWeight="700" fill="#fff">CS</text>
            </svg>
          </TaskButton>
        </TaskGroup>
        <Tray>
          <svg width="16" height="10" fill="none" stroke="#fff" strokeWidth="1.500"><path d="M1 9l7-8 7 8" /></svg>
          <svg width="20" height="16" viewBox="0 0 20 16" fill="none" stroke="#fff" strokeWidth="1.400">
            <path d="M7 3h11v10H4V9M18 6h2v4h-2M1 3h5v3c0 2-5 2-5 0zM2 3V0M5 3V0M3.500 8v5" /><path d="M8 6h4v5H8z" fill="#fff" />
          </svg>
          <svg width="18" height="17" viewBox="0 0 17 17" fill="none" stroke="#fff" strokeWidth="1.300">
            <path d="M1 16C1 7 7 1 16 1M5 16C5 9 9 5 16 5M9 16c0-4 3-7 7-7" /><circle cx="14" cy="14" r="1.500" fill="#fff" />
          </svg>
          <svg width="20" height="16" viewBox="0 0 20 16" fill="none" stroke="#fff" strokeWidth="1.300">
            <path d="M1 5h3l5-4v14l-5-4H1zM12 5l6 6M18 5l-6 6" />
          </svg>
          <svg width="21" height="21" viewBox="0 0 21 21"><path d="M0 0h20v16h-7l-3 4-3-4H0z" fill="#fff" /><path d="M4 4.500h12M4 8.500h12M4 12.500h7" stroke="#000" strokeWidth="1.500" /></svg>
          <svg width="30" height="18" viewBox="0 0 30 18" fill="none" stroke="#fff" strokeWidth="1.300">
            <path d="M1 1h28v16H1z" /><path d="M4 5h22M4 9h22" strokeDasharray="2 2" strokeWidth="2" /><path d="M7 13h16" />
          </svg>
          <span>DEU</span>
          <Clock>11:58<br />28.02.2016</Clock>
        </Tray>
      </Taskbar>
    </Page>
  );
}
